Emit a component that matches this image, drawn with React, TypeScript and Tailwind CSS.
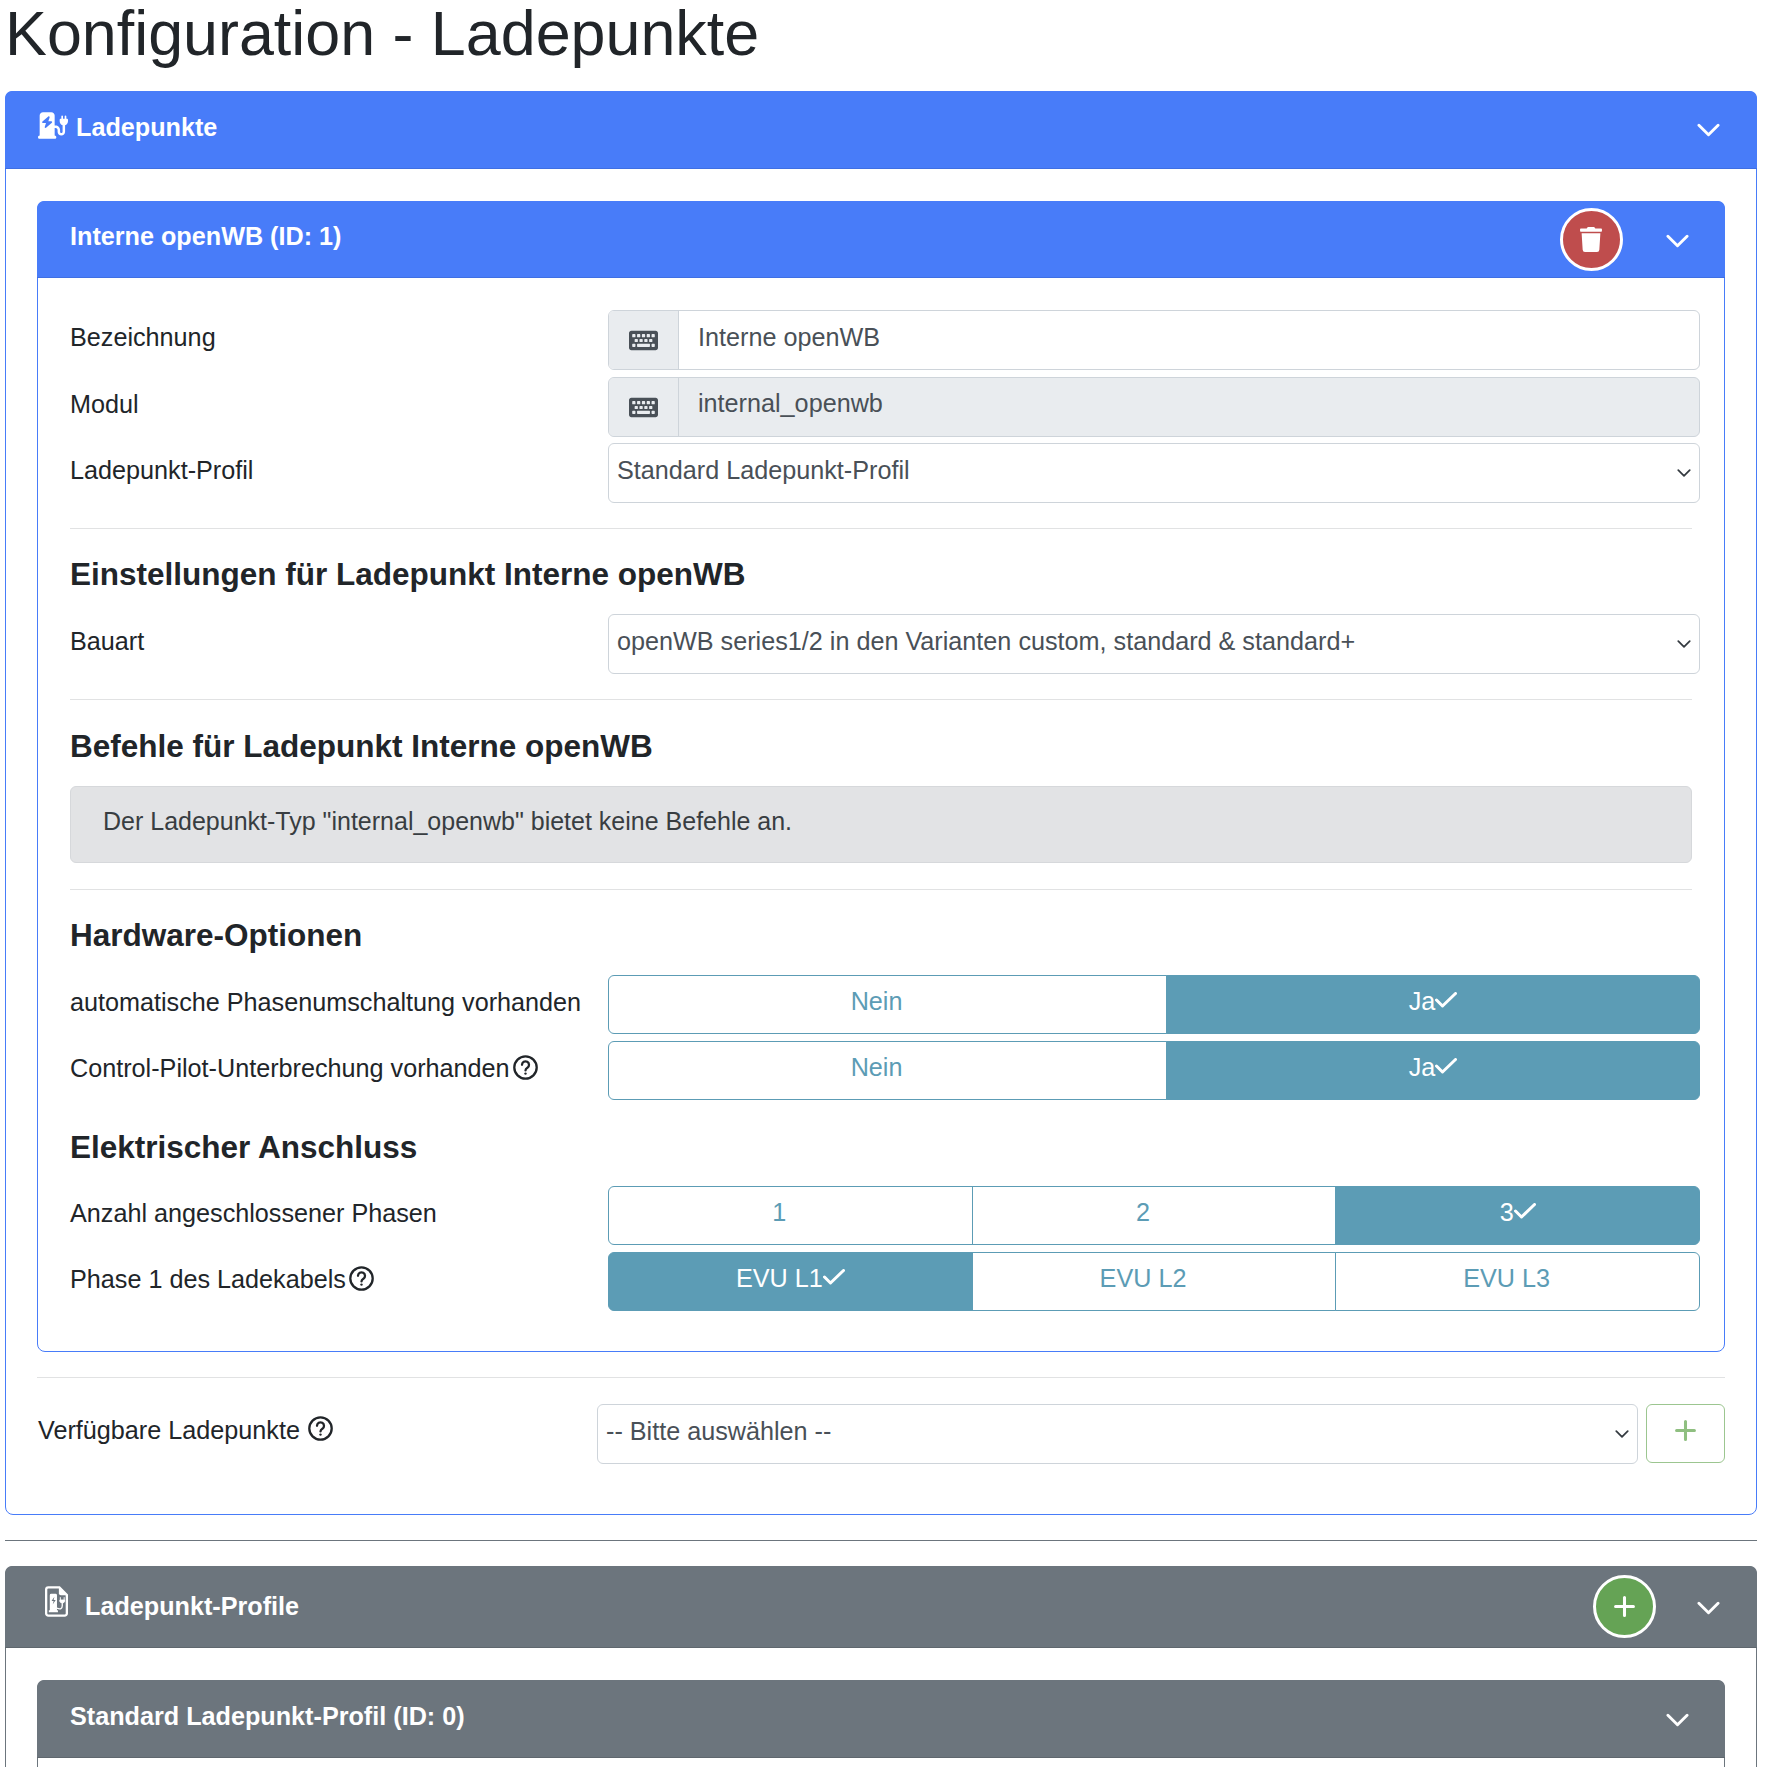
import React from "react";
import { FaKeyboard, FaTrash } from "react-icons/fa";
import { FaChargingStation } from "react-icons/fa6";

const Chevron = ({ className = "" }: { className?: string }) => (
  <svg viewBox="0 0 24 14" className={className} fill="none" stroke="currentColor" strokeWidth="3" strokeLinecap="round" strokeLinejoin="round">
    <path d="M2 2l10 10L22 2" />
  </svg>
);

const Check = ({ hidden }: { hidden?: boolean }) => (
  <svg viewBox="0 0 22 16" className={`inline-block w-[22px] h-[16px] mb-[5px] ${hidden ? "invisible" : ""}`} fill="none" stroke="currentColor" strokeWidth="3" strokeLinecap="round" strokeLinejoin="round">
    <path d="M1.5 8l6 6L20.5 1.5" />
  </svg>
);

const Help = () => (
  <svg viewBox="0 0 25 25" className="inline-block w-[25px] h-[25px] ml-[3px] mb-[4px]" fill="none" stroke="currentColor" strokeWidth="2.3" strokeLinecap="round">
    <circle cx="12.5" cy="12.5" r="11.2" />
    <path d="M9 9.8a3.5 3.5 0 1 1 5.4 3c-1.2.8-1.9 1.3-1.9 2.6" />
    <circle cx="12.5" cy="18.6" r="1.2" fill="currentColor" stroke="none" />
  </svg>
);

const Row = ({ label, children, className = "" }: { label: React.ReactNode; children: React.ReactNode; className?: string }) => (
  <div className={`flex items-start -mr-2 ${className}`}>
    <div className="w-[538px] shrink-0 pt-[9px] leading-[37px] whitespace-nowrap">{label}</div>
    <div className="flex-1 min-w-0">{children}</div>
  </div>
);

const KeyInput = ({ value, disabled }: { value: string; disabled?: boolean }) => (
  <div className={`flex h-[60px] rounded-[6px] border border-[#ced4da] overflow-hidden ${disabled ? "bg-[#e9ecef]" : "bg-white"}`}>
    <div className="w-[70px] bg-[#e9ecef] border-r border-[#ced4da] flex items-center justify-center text-[#495057]">
      <FaKeyboard className="w-[29px] h-[29px] mt-[1px] -ml-[1px]" />
    </div>
    <div className="pl-[19px] pt-[7.5px] leading-[37px] text-[#495057]">{value}</div>
  </div>
);

const Select = ({ value }: { value: string }) => (
  <div className="flex items-center justify-between h-[60px] rounded-[6px] border border-[#ced4da] bg-white pl-[8px] pr-[8px] text-[#495057]">
    <span className="leading-[37px] -mt-[4.5px]">{value}</span>
    <Chevron className="w-[14px] h-[8px] text-[#343a40]" />
  </div>
);

const Toggle = ({ items, active }: { items: string[]; active: number }) => (
  <div className="flex h-[59px]">
    {items.map((t, i) => {
      const on = i === active;
      const first = i === 0;
      const last = i === items.length - 1;
      return (
        <div
          key={t}
          className={`flex-auto min-w-0 text-center leading-[37px] pt-[7px] border border-[#5c9cb5] ${first ? "rounded-l-[6px]" : "-ml-px"} ${last ? "rounded-r-[6px]" : ""} ${on ? "bg-[#5c9cb5] text-white" : "bg-white text-[#5c9cb5]"}`}
        >
          {t}
          <Check hidden={!on} />
        </div>
      );
    })}
  </div>
);

const Hr = ({ className = "" }: { className?: string }) => <hr className={`border-0 border-t border-[#e1e2e3] ${className}`} />;

const H = ({ children, className = "" }: { children: React.ReactNode; className?: string }) => (
  <h3 className={`text-[31.5px] font-bold leading-[38px] text-[#212529] ${className}`}>{children}</h3>
);

const ProfileIcon = () => (
  <svg viewBox="0 0 24 32" className="w-[23px] h-[31px] -mt-[8px]" fill="none">
    <path d="M3.5 1.2h11.5l7.8 8v19.3a2.3 2.3 0 0 1-2.3 2.3H3.5a2.3 2.3 0 0 1-2.3-2.3V3.5a2.3 2.3 0 0 1 2.3-2.3z" stroke="white" strokeWidth="2.4" />
    <path d="M14.5 1.5v6a2 2 0 0 0 2 2h6z" fill="white" />
    <path d="M5 9.5a1.5 1.5 0 0 1 1.5-1.5h4.5a1.5 1.5 0 0 1 1.5 1.5V25H5zM4 25h9.5v2.2H4z" fill="white" />
    <path d="M9.8 11l-3 4.6h2.2L8 19l3.2-4.6H9z" fill="#6c757d" />
    <path d="M12.5 23c3.5 1.5 5.5.5 5.5-2.5v-4" stroke="white" strokeWidth="1.4" />
    <path d="M16 11.5v3M20 11.5v3M15.5 14.5h5v1.4l-1 1.3h-3l-1-1.3z" stroke="white" strokeWidth="1" fill="white" />
  </svg>
);

const Round = ({ bg, children }: { bg: string; children: React.ReactNode }) => (
  <div className={`w-[63px] h-[63px] rounded-full border-[3px] border-white flex items-center justify-center text-white ${bg}`}>{children}</div>
);

const Plus = ({ className = "" }: { className?: string }) => (
  <svg viewBox="0 0 20 20" className={className} fill="none" stroke="currentColor" strokeWidth="2.9" strokeLinecap="round">
    <path d="M10 1.5v17M1.5 10h17" />
  </svg>
);

export default function App() {
  return (
    <div className="bg-white text-[#212529] text-[25.2px] h-[1767px] overflow-hidden pl-[5px] pr-[11px]" style={{ fontFamily: '"Liberation Sans", Arial, sans-serif' }}>
      <h1 className="text-[62.8px] leading-[67px] mb-[24px] font-normal">Konfiguration - Ladepunkte</h1>

      <section className="rounded-[8px] border border-[#487cf9]">
        <header className="h-[78px] bg-[#487cf9] text-white rounded-t-[7px] -m-px flex items-start justify-between pl-[33px] pr-[37px] border-b border-[#3f6fe3]">
          <div className="flex items-center gap-[8px] mt-[20px] font-bold leading-[32px]">
            <FaChargingStation className="w-[30px] h-[27px] -mt-[3px]" />
            Ladepunkte
          </div>
          <Chevron className="w-[23px] h-[14px] mt-[32px]" />
        </header>

        <div className="pl-[31px] pr-[31.5px] pt-[33px]">
          <section className="rounded-[8px] border border-[#487cf9]">
            <header className="h-[77px] bg-[#487cf9] text-white rounded-t-[7px] -m-px flex items-start justify-between pl-[33px] pr-[36px] border-b border-[#3f6fe3]">
              <div className="mt-[19px] font-bold leading-[32px]">Interne openWB (ID: 1)</div>
              <div className="flex items-start gap-[43px]">
                <div className="mt-[7px]">
                  <Round bg="bg-[#bf4d4d]"><FaTrash className="w-[22px] h-[25px]" /></Round>
                </div>
                <Chevron className="w-[23px] h-[14px] mt-[33px]" />
              </div>
            </header>

            <div className="pl-[32px] pr-[31.5px] pt-[33px] pb-[40px]">
              <div className="flex flex-col gap-[6.5px]">
                <Row label="Bezeichnung"><KeyInput value="Interne openWB" /></Row>
                <Row label="Modul"><KeyInput value="internal_openwb" disabled /></Row>
                <Row label="Ladepunkt-Profil"><Select value="Standard Ladepunkt-Profil" /></Row>
              </div>
              <Hr className="mt-[25px] mb-[26px]" />
              <H>Einstellungen für Ladepunkt Interne openWB</H>
              <Row label="Bauart" className="mt-[20.5px]"><Select value="openWB series1/2 in den Varianten custom, standard & standard+" /></Row>
              <Hr className="mt-[25px] mb-[27px]" />
              <H>Befehle für Ladepunkt Interne openWB</H>
              <div className="mt-[21px] h-[77px] rounded-[6px] bg-[#e2e3e5] border border-[#d6d8db] text-[#383d41] text-[25px] pl-[32px] pt-[16px] leading-[37px]">
                Der Ladepunkt-Typ "internal_openwb" bietet keine Befehle an.
              </div>
              <Hr className="mt-[26px] mb-[26px]" />
              <H>Hardware-Optionen</H>
              <div className="flex flex-col gap-[7px] mt-[21px]">
                <Row label="automatische Phasenumschaltung vorhanden"><Toggle items={["Nein", "Ja"]} active={1} /></Row>
                <Row label={<span>Control-Pilot-Unterbrechung vorhanden<Help /></span>}><Toggle items={["Nein", "Ja"]} active={1} /></Row>
              </div>
              <H className="mt-[28px]">Elektrischer Anschluss</H>
              <div className="flex flex-col gap-[7px] mt-[20px]">
                <Row label="Anzahl angeschlossener Phasen"><Toggle items={["1", "2", "3"]} active={2} /></Row>
                <Row label={<span>Phase 1 des Ladekabels<Help /></span>}><Toggle items={["EVU L1", "EVU L2", "EVU L3"]} active={0} /></Row>
              </div>
            </div>
          </section>

          <Hr className="mt-[25px] mb-[26px]" />

          <div className="flex items-start">
            <div className="w-[559px] ml-[1px] shrink-0 pt-[8px] leading-[37px] flex items-center gap-[5px]">Verfügbare Ladepunkte <Help /></div>
            <div className="flex-1 min-w-0 mr-[8px]"><Select value="-- Bitte auswählen --" /></div>
            <div className="w-[79px] h-[59px] rounded-[6px] border border-[#9cc690] text-[#8fbf80] flex items-center justify-center">
              <Plus className="w-[21px] h-[21px] -mt-[5px]" />
            </div>
          </div>
          <div className="h-[50px]" />
        </div>
      </section>

      <hr className="border-0 border-t border-[#6c757d] mt-[25px] mb-[25px]" />

      <section className="rounded-[8px] border border-[#6c757d]">
        <header className="h-[82px] bg-[#6c757d] text-white rounded-t-[7px] -m-px flex items-start justify-between pl-[40px] pr-[37px] border-b border-[#5f676e]">
          <div className="flex items-center gap-[17px] mt-[24px] font-bold leading-[32px]">
            <ProfileIcon />
            Ladepunkt-Profile
          </div>
          <div className="flex items-start gap-[41px]">
            <div className="mt-[9px]">
              <Round bg="bg-[#65a355]"><Plus className="w-[21px] h-[21px]" /></Round>
            </div>
            <Chevron className="w-[23px] h-[14px] mt-[35px]" />
          </div>
        </header>
        <div className="pl-[31px] pr-[31.5px] pt-[33px]">
          <section className="rounded-[8px] border border-[#6c757d]">
            <header className="h-[78px] bg-[#6c757d] text-white rounded-t-[7px] -m-px flex items-start justify-between pl-[33px] pr-[36px] border-b border-[#5f676e]">
              <div className="mt-[20px] font-bold leading-[32px]">Standard Ladepunkt-Profil (ID: 0)</div>
              <Chevron className="w-[23px] h-[14px] mt-[33px]" />
            </header>
            <div className="h-[40px]" />
          </section>
        </div>
      </section>
    </div>
  );
}
